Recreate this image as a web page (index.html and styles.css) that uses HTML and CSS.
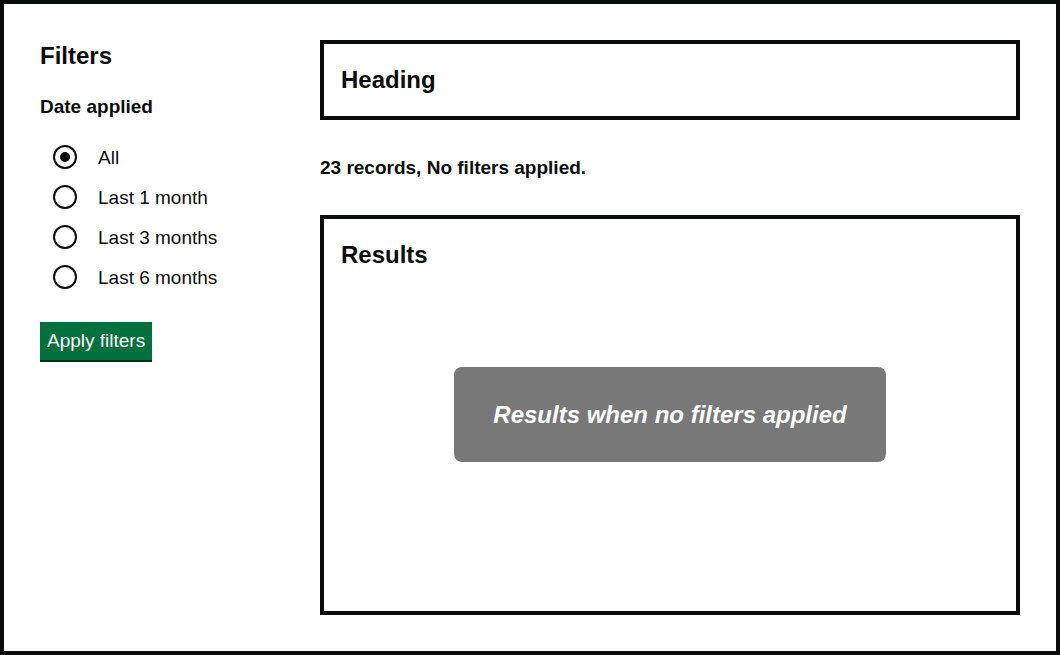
FILE: index.html
```html
<!DOCTYPE html>
<html lang="en">
<head>
<meta charset="utf-8">
<title>Filters</title>
<link rel="stylesheet" href="styles.css">
</head>
<body>
<div class="frame">
  <aside class="filters">
    <h2 class="filters-title">Filters</h2>
    <div class="group" role="radiogroup" aria-labelledby="date-legend">
      <div class="legend" id="date-legend">Date applied</div>
      <div class="radios">
        <label class="radio"><span class="radio-input checked"></span><span class="radio-label">All</span></label>
        <label class="radio"><span class="radio-input"></span><span class="radio-label">Last 1 month</span></label>
        <label class="radio"><span class="radio-input"></span><span class="radio-label">Last 3 months</span></label>
        <label class="radio"><span class="radio-input"></span><span class="radio-label">Last 6 months</span></label>
      </div>
    </div>
    <button class="button">Apply filters</button>
  </aside>
  <main class="main">
    <div class="box heading-box"><h1 class="box-title">Heading</h1></div>
    <p class="summary">23 records, No filters applied.</p>
    <div class="box results-box">
      <h2 class="box-title">Results</h2>
      <div class="placeholder">Results when no filters applied</div>
    </div>
  </main>
</div>
</body>
</html>
```
FILE: styles.css
```css
* { box-sizing: border-box; }
html, body { margin: 0; padding: 0; }
body {
  font-family: "Liberation Sans", Arial, sans-serif;
  color: #0b0c0c;
  background: #fff;
}
.frame {
  width: 1060px;
  height: 655px;
  border: 4px solid #0b0c0c;
  padding: 36px;
  display: grid;
  grid-template-columns: 280px 700px;
  align-items: start;
}
.filters {
  display: flex;
  flex-direction: column;
  align-items: flex-start;
}
.filters-title {
  margin: 1px 0 0;
  font-size: 24px;
  line-height: 30px;
  font-weight: 700;
}
.group {
  margin-top: 23px;
}
.legend {
  font-size: 19px;
  line-height: 25px;
  font-weight: 700;
}
.radios {
  margin-top: 18px;
  display: flex;
  flex-direction: column;
}
.radio {
  display: flex;
  align-items: center;
  height: 40px;
  font-size: 19px;
  line-height: 25px;
}
.radio-input {
  width: 24px;
  height: 24px;
  margin-left: 13px;
  border: 2px solid #0b0c0c;
  border-radius: 50%;
  display: flex;
  align-items: center;
  justify-content: center;
}
.radio-input.checked::after {
  content: "";
  width: 10px;
  height: 10px;
  border-radius: 50%;
  background: #0b0c0c;
}
.radio-label {
  margin-left: 21px;
}
.button {
  margin-top: 25px;
  font-family: "Liberation Sans", Arial, sans-serif;
  font-size: 19px;
  line-height: 22px;
  color: #fff;
  background: #00703c;
  border: 0;
  border-radius: 0;
  box-shadow: 0 2px 0 #002d18;
  padding: 8px 7px;
  height: 38px;
  width: 112px;
  white-space: nowrap;
}
.main {
  display: flex;
  flex-direction: column;
}
.box {
  border: 4px solid #0b0c0c;
  padding: 21px 17px;
}
.heading-box { height: 80px; }
.box-title {
  margin: 0;
  font-size: 24px;
  line-height: 30px;
  font-weight: 700;
}
.summary {
  margin: 35px 0 0;
  font-size: 19px;
  line-height: 25px;
  font-weight: 700;
}
.results-box {
  margin-top: 35px;
  height: 400px;
  padding: 21px 17px;
  display: grid;
  grid-template-areas: "stack";
}
.results-box .box-title {
  grid-area: stack;
  align-self: start;
}
.placeholder {
  grid-area: stack;
  align-self: center;
  justify-self: center;
  width: 432px;
  height: 95px;
  margin-top: -1px;
  background: #777877;
  border-radius: 8px;
  color: #fff;
  font-size: 24px;
  font-weight: 700;
  font-style: italic;
  display: flex;
  align-items: center;
  justify-content: center;
}
```
